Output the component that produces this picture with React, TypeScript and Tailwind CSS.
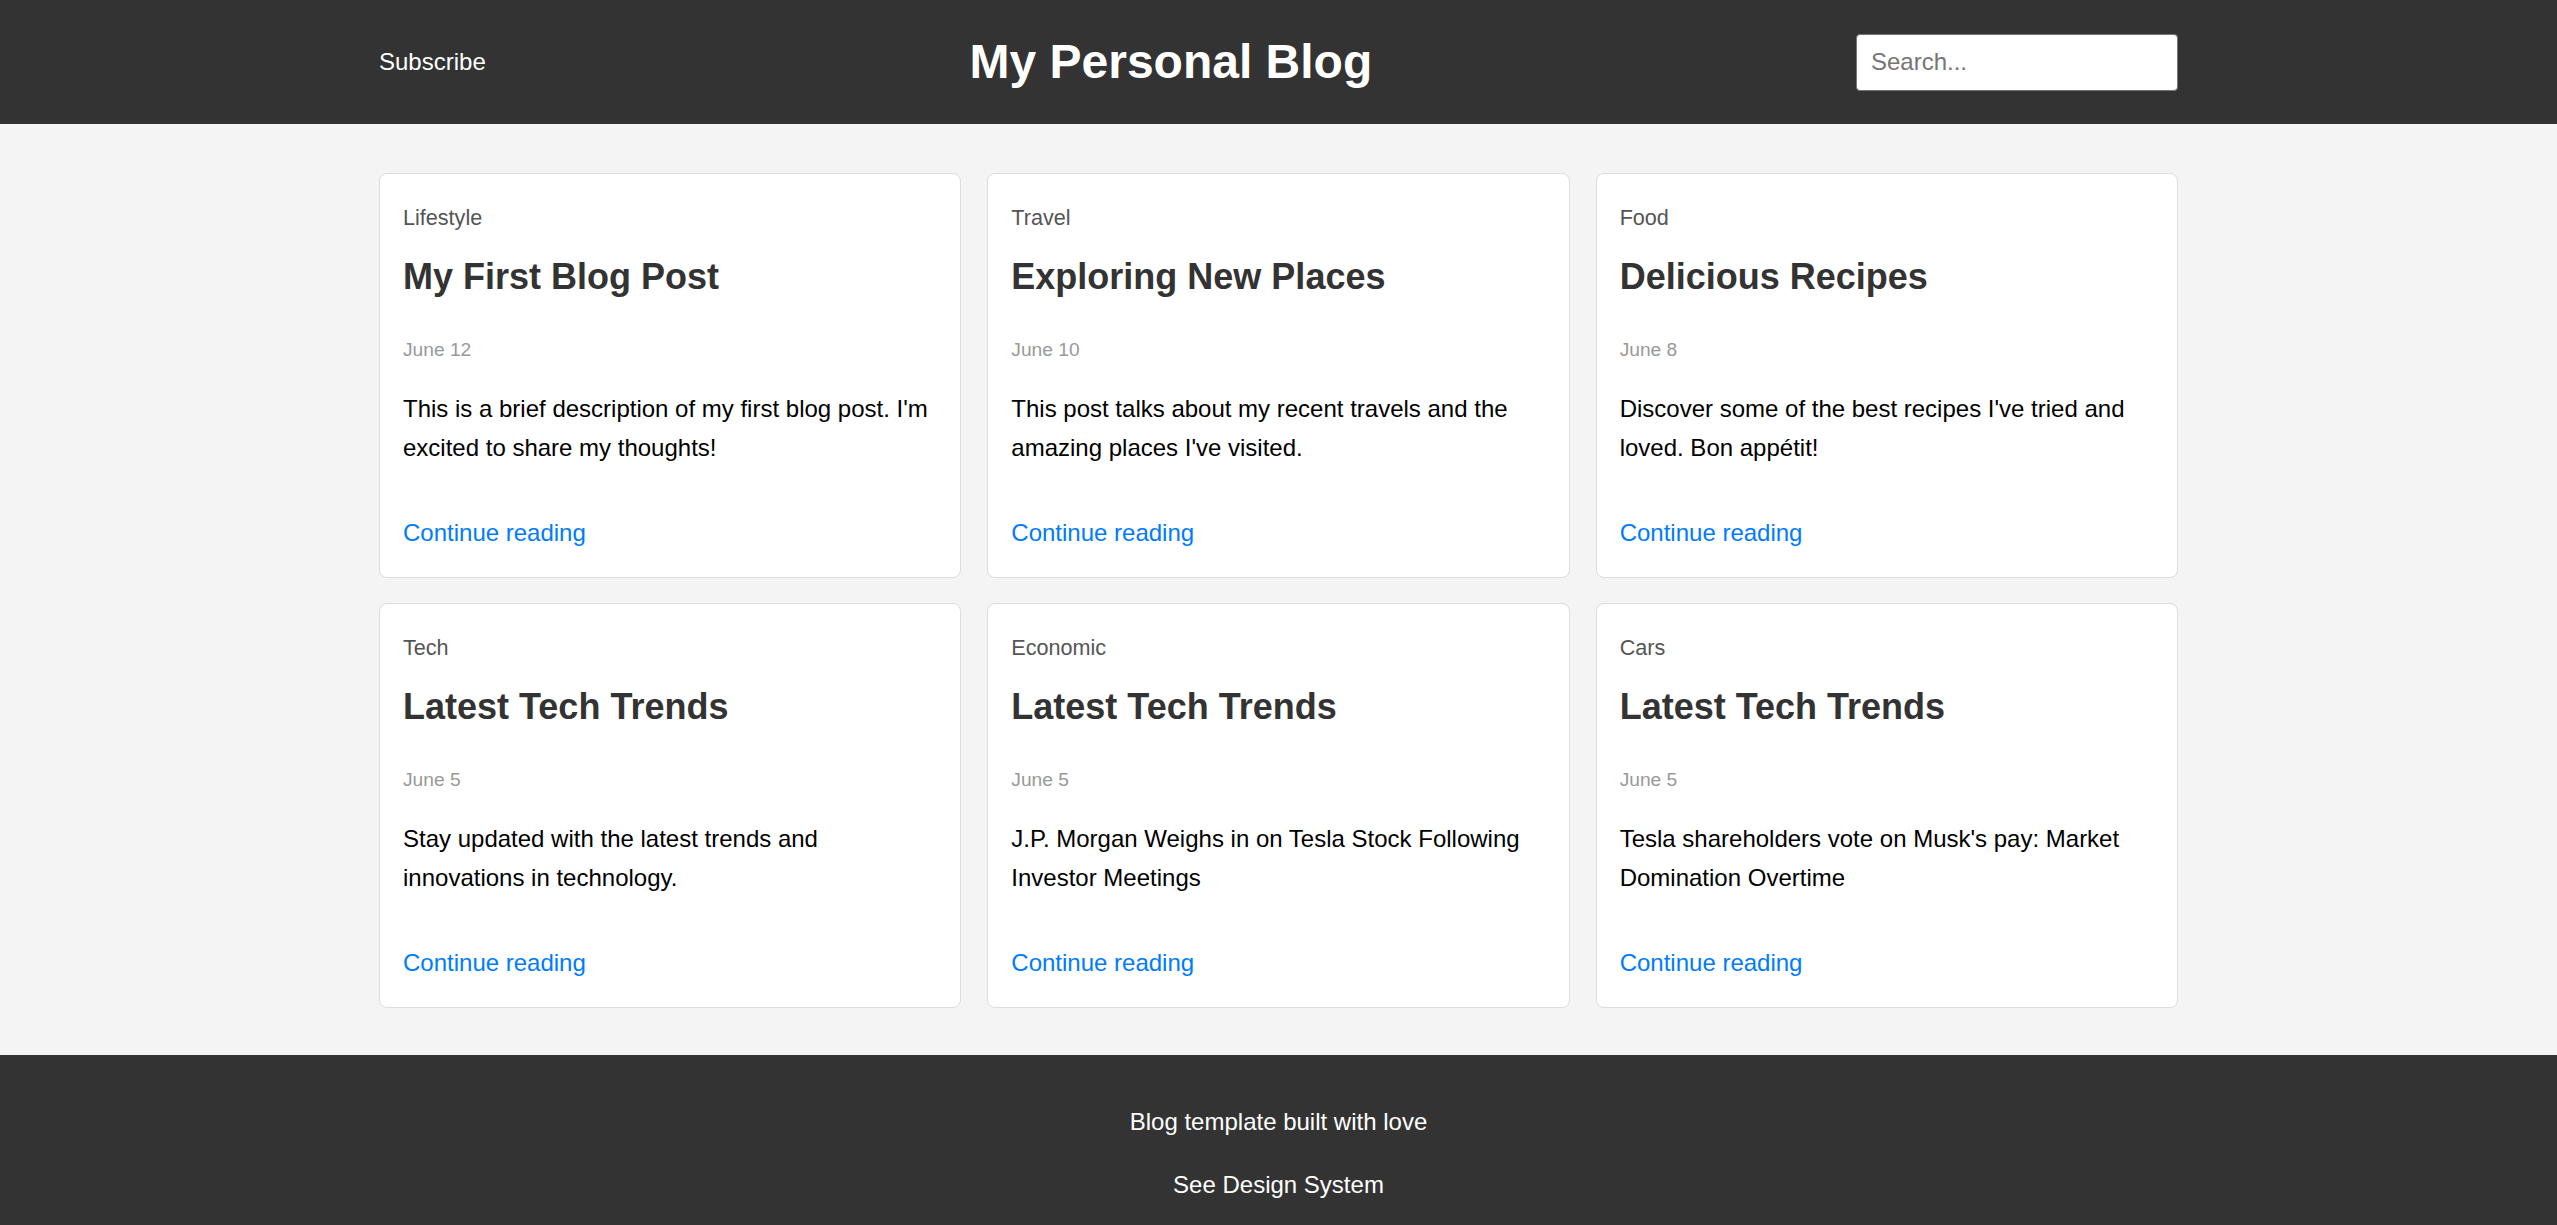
import React from 'react';

interface Post {
  category: string;
  title: string;
  date: string;
  excerpt: string;
}

const posts: Post[] = [
  {
    category: 'Lifestyle',
    title: 'My First Blog Post',
    date: 'June 12',
    excerpt: "This is a brief description of my first blog post. I'm excited to share my thoughts!",
  },
  {
    category: 'Travel',
    title: 'Exploring New Places',
    date: 'June 10',
    excerpt: "This post talks about my recent travels and the amazing places I've visited.",
  },
  {
    category: 'Food',
    title: 'Delicious Recipes',
    date: 'June 8',
    excerpt: "Discover some of the best recipes I've tried and loved. Bon appétit!",
  },
  {
    category: 'Tech',
    title: 'Latest Tech Trends',
    date: 'June 5',
    excerpt: 'Stay updated with the latest trends and innovations in technology.',
  },
  {
    category: 'Economic',
    title: 'Latest Tech Trends',
    date: 'June 5',
    excerpt: 'J.P. Morgan Weighs in on Tesla Stock Following Investor Meetings',
  },
  {
    category: 'Cars',
    title: 'Latest Tech Trends',
    date: 'June 5',
    excerpt: "Tesla shareholders vote on Musk's pay: Market Domination Overtime",
  },
];

const PostCard = ({ post }: { post: Post }) => (
  <article className="flex flex-col bg-white border border-[#dddddd] rounded-[8px] px-[23px] pt-[24px] pb-[25px]">
    <div className="text-[21.6px] leading-[40px] text-[#555555]">{post.category}</div>
    <h2 className="mt-[17px] text-[36px] leading-[44px] font-bold text-[#333333]">{post.title}</h2>
    <div className="mt-[37px] text-[19.2px] leading-[28px] text-[#999999]">{post.date}</div>
    <p className="mt-[25px] text-[24px] leading-[39px] text-black">{post.excerpt}</p>
    <a href="#" className="mt-auto pt-[47px] text-[24px] leading-[38px] text-[#007bff]">
      Continue reading
    </a>
  </article>
);

export default function App() {
  return (
    <div className="min-h-screen bg-[#f4f4f4] font-['Liberation_Sans',Arial,sans-serif]">
      <header className="bg-[#333333] h-[124px]">
        <div className="w-[1799px] mx-auto h-full flex items-center justify-between">
          <a href="#" className="text-white text-[24px] leading-[38px]">
            Subscribe
          </a>
          <h1 className="text-white text-[48px] font-bold leading-[56px]">My Personal Blog</h1>
          <input
            type="text"
            placeholder="Search..."
            className="w-[322px] h-[57px] bg-white border border-[#767676] rounded-[4px] px-[14px] text-[24px] text-black placeholder:text-[#757575] outline-none"
          />
        </div>
      </header>

      <main className="w-[1799px] mx-auto pt-[49px] pb-[47px] grid grid-cols-3 gap-x-[26px] gap-y-[25px]">
        {posts.map((p, i) => (
          <PostCard key={i} post={p} />
        ))}
      </main>

      <footer className="bg-[#333333] text-white text-center pt-[48px] pb-[48px]">
        <p className="text-[24px] leading-[38px]">Blog template built with love</p>
        <p className="mt-[25px] text-[24px] leading-[38px]">
          <a href="#">See Design System</a>
        </p>
      </footer>
    </div>
  );
}
